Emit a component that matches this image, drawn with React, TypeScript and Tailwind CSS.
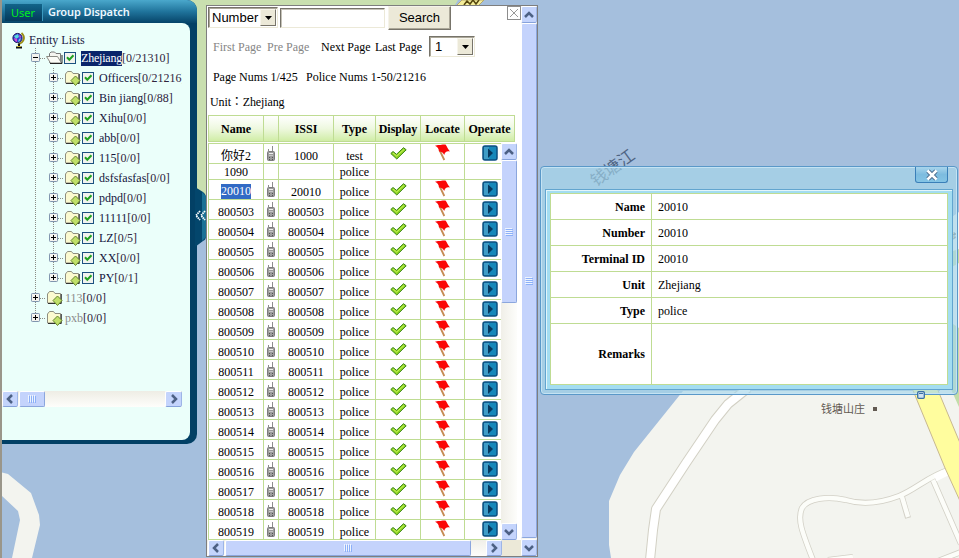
import React from "react";

const SERIF = "font-['Liberation_Serif','Noto_Sans_CJK_SC',serif]";

function MapCanvas() {
  return (
    <svg className="absolute inset-0" width="959" height="558" viewBox="0 0 959 558">
      <rect width="959" height="558" fill="#a5bfdd" />
      <path d="M190 0H458L440 30L230 215L190 225Z" fill="#c9dfaf" />
      <path d="M452 10L462 0H484L470 14Z" fill="#f5ee9a" stroke="#b5a76a" />
      <path d="M464 5l3-4 3 3 3-4 3 4 3-4" stroke="#54450c" strokeWidth="1.5" fill="none" />
      <path d="M0 472L8 474L31 493L39 515L40 525L32 558H12L20 520L18 511L2 496H0Z" fill="#f3f4ef" />
      <path d="M683 391L634 452L620 475L609 501V545L611 558H959V212L940 225V391Z" fill="#f3f4ef" />
      <path d="M950 252L959 249V263L950 268ZM950 322L959 328V407L950 387Z" fill="#c3dda8" />
      <path d="M748 388L728 404L715 420L686 463L656 509L653 530L650 560" fill="none" stroke="#d2d0c4" strokeWidth="10" strokeLinejoin="round" />
      <path d="M748 388L728 404L715 420L686 463L656 509L653 530L650 560" fill="none" stroke="#fff" strokeWidth="8" strokeLinejoin="round" />
      <path d="M949 470C930 475 915 490 899 496C878 504 862 505 846 500C828 496 808 498 802 508C797 519 802 532 813 560M902 497L908 518M933 480L961 544M828 560L853 557M938 561L961 552" fill="none" stroke="#d2d0c6" strokeWidth="6" />
      <path d="M949 470C930 475 915 490 899 496C878 504 862 505 846 500C828 496 808 498 802 508C797 519 802 532 813 560M902 497L908 517M933 480L961 544M828 560L853 557M938 561L961 552" fill="none" stroke="#fcfdf9" strokeWidth="4.4" />
      <path d="M935 478L949 471" stroke="#fff" strokeWidth="7" />
      <path d="M912 388H937L960 443V501L945 468Z" fill="#fffd9e" stroke="#c8b890" />
      <text x="821" y="413" fontSize="11" fill="#625a52" className="font-['Noto_Sans_CJK_SC',sans-serif]">钱塘山庄</text>
      <rect x="873" y="407" width="4" height="4" fill="#625a52" />
      <text transform="translate(596 187) rotate(-36)" fontSize="16.500" fill="#4f6584" className="font-['Noto_Sans_CJK_SC',sans-serif]">钱塘江</text>
      <text x="950" y="239" fontSize="8" fill="#444" className="font-['Noto_Sans_CJK_SC',sans-serif]">步</text>
    </svg>
  );
}

/* ---------- tree ---------- */

type GuideKind = "line" | "plus" | "minus" | "last" | "end";

function Guide({ kind }: { kind: GuideKind }) {
  const box = kind !== "line";
  const stop = kind === "last" || kind === "end";
  return (
    <svg className="shrink-0" width="18" height="20" viewBox="0 0 18 20">
      <path d={stop ? "M8.5 0V10" : "M8.5 0V20"} stroke="#8c8c84" strokeDasharray="1 1" />
      {box && (
        <>
          <path d="M13 10.5H18" stroke="#8c8c84" strokeDasharray="1 1" />
          <rect x="4.5" y="5.5" width="8" height="8" rx="0.8" fill="#f4f3ee" stroke="#8095ae" />
          <path d={kind === "minus" ? "M6 9.5H11" : "M6 9.5H11M8.5 7V12"} stroke="#000" />
        </>
      )}
    </svg>
  );
}

function Folder({ open }: { open?: boolean }) {
  return (
    <svg className="shrink-0" width="18" height="20" viewBox="0 0 18 20">
      {open ? (
        <>
          <path d="M4.500 8V5.500L6 4H9.500L11 5.500H15.500V14.500H4.500Z" fill="#f5f5f0" stroke="#777" />
          <path d="M1.500 8.500H12.500L16.500 15H5.500Z" fill="#fbfbf6" stroke="#8b8b83" />
          <path d="M5 15.500H17V7" stroke="#222" fill="none" />
        </>
      ) : (
        <>
          <path d="M2.500 15V6L4.500 3.500H8.500L10 5.500H15.500V15Z" fill="#fbfad0" stroke="#8e8e80" />
          <path d="M3 15.500H16.300V6" stroke="#333" fill="none" />
          <path d="M12.500 8L17 12.500L12.500 17.500L8 12.500Z" fill="#c0df6a" stroke="#64852c" />
        </>
      )}
    </svg>
  );
}

function Check() {
  return (
    <svg className="shrink-0" width="18" height="20" viewBox="0 0 18 20">
      <rect x="1.500" y="4.500" width="11" height="11" fill="#f2f3ee" stroke="#1c5180" />
      <path d="M4 9.300L6.300 11.800L10.500 7.300" stroke="#21a121" strokeWidth="2" fill="none" />
    </svg>
  );
}

type Node = { guides: GuideKind[]; name: string; count: string; check?: boolean; open?: boolean };

const NODES: Node[] = [
  { guides: ["minus"], name: "Zhejiang", count: "[0/21310]", check: true, open: true },
  { guides: ["line", "plus"], name: "Officers", count: "[0/21216]", check: true },
  { guides: ["line", "plus"], name: "Bin jiang", count: "[0/88]", check: true },
  { guides: ["line", "plus"], name: "Xihu", count: "[0/0]", check: true },
  { guides: ["line", "plus"], name: "abb", count: "[0/0]", check: true },
  { guides: ["line", "plus"], name: "115", count: "[0/0]", check: true },
  { guides: ["line", "plus"], name: "dsfsfasfas", count: "[0/0]", check: true },
  { guides: ["line", "plus"], name: "pdpd", count: "[0/0]", check: true },
  { guides: ["line", "plus"], name: "11111", count: "[0/0]", check: true },
  { guides: ["line", "plus"], name: "LZ", count: "[0/5]", check: true },
  { guides: ["line", "plus"], name: "XX", count: "[0/0]", check: true },
  { guides: ["line", "last"], name: "PY", count: "[0/1]", check: true },
  { guides: ["plus"], name: "113", count: "[0/0]" },
  { guides: ["end"], name: "pxb", count: "[0/0]" },
];

function TreeRow({ node }: { node: Node }) {
  return (
    <div className="flex h-5 items-center whitespace-nowrap pl-[25px] text-xs leading-[15px]">
      {node.guides.map((g, i) => (
        <Guide key={i} kind={g} />
      ))}
      <Folder open={node.open} />
      {node.check ? <Check /> : <span className="w-0.5 shrink-0" />}
      <span className={node.open ? "bg-[#0a246a] tracking-[-0.200px] text-white" : node.check ? "text-[#14143c]" : "text-[#8b8b8b]"}>{node.name}</span>
      <span className="text-[#30243c]">{node.count}</span>
    </div>
  );
}

/* ---------- scrollbar parts ---------- */

function Arrow({ dir, className }: { dir: "up" | "down" | "left" | "right"; className: string }) {
  const d = {
    up: "M4 10L8 6L12 10",
    down: "M4 6L8 10L12 6",
    left: "M10 4L6 8L10 12",
    right: "M6 4L10 8L6 12",
  }[dir];
  return (
    <div className={"flex shrink-0 items-center justify-center rounded-[2px] border border-white border-r-[#9db5e6] border-b-[#86a2db] bg-[#c4d4fc] " + className}>
      <svg className="shrink-0" width="16" height="16" viewBox="0 0 16 16">
        <path d={d} stroke="#4d6185" strokeWidth="2.500" fill="none" />
      </svg>
    </div>
  );
}

function Thumb({ vertical, className }: { vertical?: boolean; className: string }) {
  return (
    <div className={"flex shrink-0 items-center justify-center rounded-[2px] border border-white border-r-[#8ba6dd] border-b-[#8ba6dd] bg-[#c4d3fc] " + className}>
      <svg width="8" height="8" viewBox="0 0 8 8">
        <path d={vertical ? "M0 .5H7M0 2.500H7M0 4.500H7M0 6.500H7" : "M.5 0V7M2.500 0V7M4.500 0V7M6.500 0V7"} stroke="#eef4fe" />
        <path d={vertical ? "M1 1.500H8M1 3.500H8M1 5.500H8M1 7.500H8" : "M1.500 1V8M3.500 1V8M5.500 1V8M7.500 1V8"} stroke="#8cb0f8" />
      </svg>
    </div>
  );
}

function Sidebar() {
  return (
    <aside className="absolute left-0 top-0 flex h-[444px] w-[197px] flex-col rounded-r-[10px] border-l-2 border-[#9a968a] bg-[#024065]">
      <header className="flex h-[23px] shrink-0 items-center rounded-tr-[10px] bg-gradient-to-b from-[#4aa8cc] via-[#20749c] to-[#064469] font-['Noto_Sans',sans-serif] text-[11px] font-semibold leading-4">
        <div className="ml-[3px] mt-0.5 flex h-[17px] w-[38px] items-center border-r border-[#3b9ac0] bg-gradient-to-b from-[#126489] to-[#053a5c] pl-1.5">
          <span className="font-normal text-[#00f020]">User</span>
        </div>
        <span className="ml-[5px] tracking-[-0.100px] text-[#edf8ff]">Group Dispatch</span>
      </header>
      <div className={"mr-[7px] flex h-[417px] flex-col overflow-hidden rounded-r-[8px] bg-[#ebfffa] pt-[8px] " + SERIF}>
        <div className="flex h-[17px] items-center pl-[9px] text-xs leading-4 text-[#202044]">
          <svg className="mr-[3px] mt-px shrink-0" width="15" height="17" viewBox="0 0 15 17">
            <path d="M10.500 1C14 4 14 9 9 11.500L7 13" stroke="#9a8c14" strokeWidth="1.800" fill="none" />
            <circle cx="6.500" cy="6" r="4.600" fill="#3b36d6" stroke="#1b1b60" />
            <path d="M3 4L7 2L8 5L5 7ZM8 7l2-1-1 3-2 1Z" fill="#56d9dc" />
            <path d="M3 6l3 1 0 3-2-1ZM8 3l2 1-1 3Z" fill="#d44fd0" />
            <path d="M8 11.500V14M5 15.500H11" stroke="#111" strokeWidth="2" />
            <path d="M6 14.500H10" stroke="#c8b62a" />
          </svg>
          Entity Lists
        </div>
        <div className="w-[180px] overflow-hidden">
          {NODES.map((n) => (
            <TreeRow key={n.name} node={n} />
          ))}
        </div>
        <div className="mt-[63px] flex h-4 w-[180px] items-center bg-gradient-to-b from-[#eeede5] to-[#fefefb]">
          <Arrow dir="left" className="h-4 w-4" />
          <Thumb className="ml-px h-4 w-[26px]" />
          <Arrow dir="right" className="ml-auto h-4 w-[17px]" />
        </div>
      </div>
    </aside>
  );
}

/* ---------- list panel ---------- */

function Handset() {
  return (
    <svg width="9" height="16" viewBox="0 0 9 16">
      <path d="M5.500 0V5M1.500 3V5" stroke="#8d8d8d" />
      <rect x="0.500" y="5.500" width="7" height="9" rx="1" fill="#9c9c9c" stroke="#7c7c7c" />
      <path d="M2 7.500H6" stroke="#efefef" />
      <path d="M2 9.500H6" stroke="#c5c5c5" />
      <path d="M2 11.500H3M5 11.500H6M2 13.500H3M5 13.500H6" stroke="#555" />
    </svg>
  );
}

function Tick() {
  return (
    <svg width="17" height="13" viewBox="0 0 17 13">
      <path d="M.8 6.500L3 4.500L6.500 7.300L13.500 .7L16.200 2.800L6.800 12Z" fill="#8ed423" stroke="#3b8417" strokeLinejoin="round" />
      <path d="M3 6L6.700 9L14 2.500" stroke="#c7f05b" fill="none" />
    </svg>
  );
}

function Flag() {
  return (
    <svg width="16" height="17" viewBox="0 0 16 17">
      <path d="M4.500 6L9.300 16" stroke="#c68a53" strokeWidth="1.800" />
      <path d="M0 1.800L3 1C6 1.500 7.500-.2 10.500 .6C12.500 3 12.500 5 15 7.500C12 6.500 9.800 8 9.200 11C7.500 7.500 5 7.500 4 7.500C4 5 2.500 3 0 1.800Z" fill="#fb0707" />
    </svg>
  );
}

function Play() {
  return (
    <svg width="16" height="16" viewBox="0 0 16 16">
      <rect x="1" y="1" width="14" height="14" rx="2" fill="#1687b9" stroke="#0c4f80" strokeWidth="1.500" />
      <path d="M2 2H7V14H2Z" fill="#3f9cc6" />
      <path d="M6 3.500L11 8L6 13Z" fill="#06375d" />
    </svg>
  );
}

const GRID = "grid grid-cols-[55px_15px_55px_42px_45px_44px_50px]";
const CELL = "flex items-center justify-center overflow-hidden border-r border-[#bfdc93]";
const IDS = Array.from({ length: 17 }, (_, i) => String(800503 + i));

function Row({ name, issi, type, plain, selected }: { name: string; issi?: string; type: string; plain?: boolean; selected?: boolean }) {
  const pad = plain ? "" : " pt-[4px]";
  return (
    <div className={GRID + " border-b border-[#bfdc93] " + (plain ? "h-4" : "h-5")}>
      <div className={CELL + pad}>
        <span className={selected ? "bg-[#316ac5] leading-[15px] text-white" : ""}>{name}</span>
      </div>
      <div className={CELL}>{!plain && <Handset />}</div>
      <div className={CELL + pad}>{issi}</div>
      <div className={CELL + pad}>{type}</div>
      <div className={CELL}>{!plain && <Tick />}</div>
      <div className={CELL + " pb-0.5"}>{!plain && <Flag />}</div>
      <div className="flex items-center justify-center pb-px pr-px">{!plain && <Play />}</div>
    </div>
  );
}

function Drop({ children, className }: { children: React.ReactNode; className: string }) {
  return (
    <div className={"flex items-center justify-between border border-[#ece9d8] border-l-[#76736a] border-t-[#76736a] bg-white font-['Liberation_Sans',sans-serif] text-[13px] text-black shadow-[inset_1px_1px_0_#aca899] " + className}>
      <span>{children}</span>
      <span className="mr-px flex h-[17px] w-4 items-center justify-center border border-[#f7f5ec] border-b-[#77746a] border-r-[#77746a] bg-[#ece9d8]">
        <svg width="7" height="4" viewBox="0 0 7 4">
          <path d="M0 0H7L3.500 4Z" fill="#000" />
        </svg>
      </span>
    </div>
  );
}

function ListPanel() {
  return (
    <section className={"absolute left-[206px] top-[5px] flex h-[552px] w-[332px] border border-[#7e7e7e] bg-white text-xs leading-[14px] text-black " + SERIF}>
      <div className="flex w-[314px] flex-col">
        <div className="flex h-[23px] shrink-0 pl-px">
          <Drop className="mt-px h-[21px] w-[70px] pl-[3px]">Number</Drop>
          <div className="ml-[2px] mt-[2px] h-5 w-[105px] border border-[#ece9d8] border-l-[#76736a] border-t-[#76736a] shadow-[inset_1px_1px_0_#c5c2b8]" />
          <button className="ml-[3px] h-6 w-[63px] border border-[#f5f3ea] border-b-[#77746a] border-r-[#77746a] bg-[#ece9d8] font-['Liberation_Sans',sans-serif] text-[13px] shadow-[inset_-1px_-1px_0_#aca899]">
            Search
          </button>
          <div className="ml-auto flex h-[14px] w-[14px] items-center justify-center border border-[#8d8d8d]">
            <svg width="12" height="12" viewBox="0 0 12 12">
              <path d="M2 2L10 10M10 2L2 10" stroke="#999" />
            </svg>
          </div>
        </div>
        <div className="flex h-[35px] shrink-0 items-center pl-[6px]">
          <span className="w-[54px] text-[#858585]">First Page</span>
          <span className="w-[54px] text-[#858585]">Pre Page</span>
          <span className="w-[54px]">Next Page</span>
          <span className="w-[54px]">Last Page</span>
          <Drop className="h-[21px] w-[46px] pl-[5px]">1</Drop>
        </div>
        <div className="flex h-[25px] shrink-0 items-center pl-[6px]">
          <span className="w-[93px] tracking-[-0.050px]">Page Nums 1/425</span>
          <span>Police Nums 1-50/21216</span>
        </div>
        <div className="flex h-[26px] shrink-0 items-center pl-[3px] font-['Liberation_Serif','Noto_Sans_CJK_TC',serif] tracking-[-0.120px]">Unit：Zhejiang</div>
        <div className={"ml-px h-[27px] w-[307px] shrink-0 border border-r-0 border-[#bfdc93] bg-gradient-to-b from-white via-[#eef8df] to-[#d0eda5] font-bold " + GRID}>
          {["Name", "", "ISSI", "Type", "Display", "Locate", "Operate"].map((h, i) => (
            <div key={i} className="flex items-center justify-center border-r border-[#bfdc93]">{h}</div>
          ))}
        </div>
        <div className="ml-px mt-px flex h-[397px] shrink-0">
          <div className="w-[293px] overflow-hidden border-l border-t border-[#bfdc93]">
            <Row name="你好2" issi="1000" type="test" />
            <Row name="1090" type="police" plain />
            <Row name="20010" issi="20010" type="police" selected />
            {IDS.map((id) => (
              <Row key={id} name={id} issi={id} type="police" />
            ))}
          </div>
          <div className="flex w-4 flex-col bg-gradient-to-r from-[#f0efe8] to-[#fdfdfb]">
            <Arrow dir="up" className="h-[17px] w-4" />
            <Thumb vertical className="h-[143px] w-4" />
            <Arrow dir="down" className="mt-auto h-[17px] w-4" />
          </div>
        </div>
        <div className="flex h-4 shrink-0 bg-[#ece9d8]">
          <div className="flex w-[295px] bg-gradient-to-b from-[#f0efe8] to-[#fdfdfb]">
            <Arrow dir="left" className="ml-px h-4 w-4" />
            <Thumb className="ml-px h-4 w-[246px]" />
            <Arrow dir="right" className="ml-auto h-4 w-4" />
          </div>
        </div>
      </div>
      <div className="flex w-4 flex-col bg-[#f5f4f0]">
        <Arrow dir="up" className="h-[17px] w-4" />
        <Thumb vertical className="h-[515px] w-4" />
        <Arrow dir="down" className="mt-auto h-[17px] w-4" />
      </div>
    </section>
  );
}

/* ---------- detail window ---------- */

const DETAILS: [string, string][] = [
  ["Name", "20010"],
  ["Number", "20010"],
  ["Terminal ID", "20010"],
  ["Unit", "Zhejiang"],
  ["Type", "police"],
  ["Remarks", ""],
];

function DetailWindow() {
  return (
    <section className={"absolute left-[540px] top-[166px] flex h-[229px] w-[418px] flex-col rounded-[4px] border border-[#5a98c8] bg-[#a5d5ea]/65 px-1 pb-1 text-xs leading-[14px] text-black shadow-[inset_0_0_0_1px_#c4e3f3] " + SERIF}>
      <div className="flex h-[22px] shrink-0 justify-end pr-[5px]">
        <button className="flex h-4 w-[33px] items-center justify-center rounded-b-[3px] border border-t-0 border-[#3a7fb8] bg-gradient-to-b from-[#a9d5ec] via-[#7dbcdf] to-[#84c4e5]">
          <svg width="12" height="12" viewBox="0 0 12 12">
            <path d="M2 2L10 10M10 2L2 10" stroke="#415f82" strokeWidth="4.500" />
            <path d="M1.500 1.500L10.500 10.500M10.500 1.500L1.500 10.500" stroke="#fff" strokeWidth="2.600" />
          </svg>
        </button>
      </div>
      <div className="h-[201px] border border-[#62a5cf] bg-[#a3ddf1] px-[4px] pb-[4px] pt-[3px] shadow-[inset_1px_1px_0_#e2f5fb]">
        <div className="flex h-[192px] flex-col border border-[#bfdc93] bg-white">
          {DETAILS.map(([k, v], i) => (
            <div key={k} className={"flex border-[#bfdc93] " + (i < 5 ? "h-[26px] border-b" : "h-[60px]")}>
              <div className="flex w-[101px] items-center justify-end border-r border-[#bfdc93] pr-[6px] font-bold">{k}</div>
              <div className="flex items-center pl-[6px]">{v}</div>
            </div>
          ))}
        </div>
      </div>
    </section>
  );
}

export default function App() {
  return (
    <main className="relative h-[558px] w-[959px] overflow-hidden">
      <MapCanvas />
      <div className="absolute left-0 top-0 h-full w-0.5 bg-[#9a968a]" />
      <Sidebar />
      <svg className="absolute left-[195px] top-[187px]" width="11" height="60" viewBox="0 0 11 60">
        <path d="M0 0L8 5Q11 7 11 10V49Q11 53 8 54L0 60Z" fill="#03466c" />
        <path d="M7 5L11 9V50L7 54Z" fill="#1a7195" />
        <path d="M5 24L1 28.500L5 33M10 24L6 28.500L10 33" stroke="#fff" strokeWidth="1.800" strokeDasharray="1.500 0.700" fill="none" />
      </svg>
      <ListPanel />
      <DetailWindow />
      <svg className="absolute left-[917px] top-[391px]" width="8" height="8" viewBox="0 0 8 8">
        <rect x="0.700" y="0.700" width="6.600" height="6.600" rx="1" fill="#cfe2f2" stroke="#3a70a4" strokeWidth="1.300" />
        <path d="M2 2.500H6" stroke="#3a70a4" />
      </svg>
    </main>
  );
}
